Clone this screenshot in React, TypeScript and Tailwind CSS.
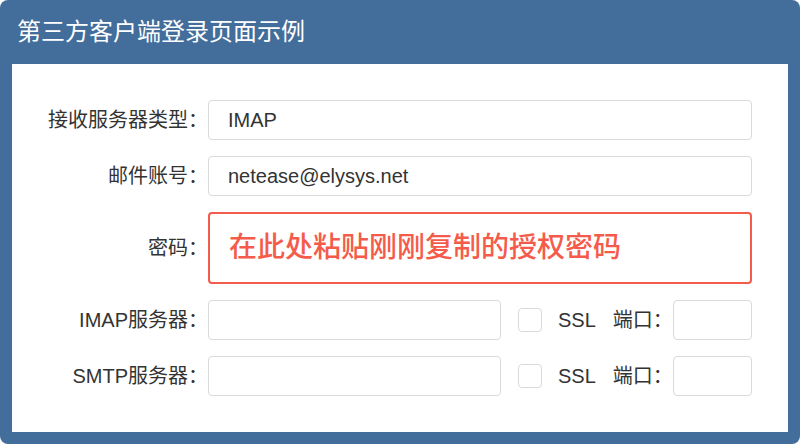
const font = "font-['Liberation_Sans','Noto_Sans_CJK_SC',sans-serif]";

function Label({ children }: { children: React.ReactNode }) {
  return (
    <div className="w-[196px] shrink-0 text-right text-[20px] text-[#333] leading-none whitespace-nowrap">
      {children}
    </div>
  );
}

function Field({ value, className = "" }: { value?: string; className?: string }) {
  return (
    <div
      className={`h-[40px] flex items-center rounded-[4px] border border-[#d9d9d9] bg-white pl-[19px] text-[20px] text-[#333] ${className}`}
    >
      {value}
    </div>
  );
}

function ServerRow({ label }: { label: string }) {
  return (
    <div className="flex items-center">
      <Label>{label}：</Label>
      <Field className="w-[293px]" />
      <div className="ml-[17px] w-[24px] h-[24px] rounded-[4px] border border-[#d9d9d9] bg-white" />
      <span className="ml-4 text-[20px] text-[#333] leading-none">SSL</span>
      <span className="ml-[17px] text-[20px] text-[#333] leading-none whitespace-nowrap">端口：</span>
      <Field className="flex-1" />
    </div>
  );
}

export default function App() {
  return (
    <div className={`w-[800px] h-[444px] bg-white ${font}`}>
      <div className="w-full h-full rounded-lg bg-[#436d9a] flex flex-col px-3 pb-3">
        <div className="h-[64px] flex items-center pl-[5px] text-[24px] text-white leading-none">
          第三方客户端登录页面示例
        </div>
        <div className="flex-1 bg-white pt-[36px] pr-[36px] flex flex-col gap-4">
          <div className="flex items-center">
            <Label>接收服务器类型：</Label>
            <Field className="flex-1" value="IMAP" />
          </div>
          <div className="flex items-center">
            <Label>邮件账号：</Label>
            <Field className="flex-1" value="netease@elysys.net" />
          </div>
          <div className="flex items-center">
            <Label>密码：</Label>
            <div className="flex-1 h-[72px] flex items-center rounded-[4px] border-2 border-[#f55b4b] pl-[19px] text-[28px] font-medium text-[#f55b4b] leading-none">
              在此处粘贴刚刚复制的授权密码
            </div>
          </div>
          <ServerRow label="IMAP服务器" />
          <ServerRow label="SMTP服务器" />
        </div>
      </div>
    </div>
  );
}
